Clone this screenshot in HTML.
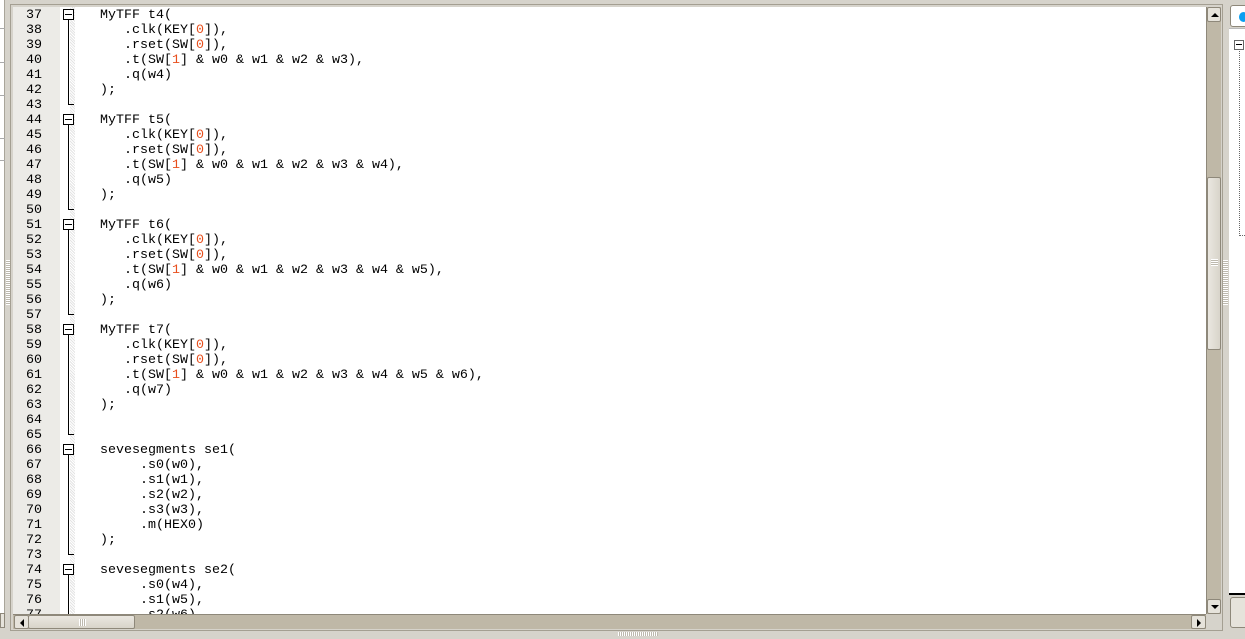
<!DOCTYPE html>
<html><head><meta charset="utf-8"><style>
*{margin:0;padding:0;box-sizing:border-box}
body{width:1245px;height:639px;background:#d6d3cb;position:relative;overflow:hidden;font-family:"Liberation Mono",monospace}
.abs{position:absolute}
#leftp{left:0;top:0;width:5px;height:628px;background:#fff;border-right:1px solid #a9a59a}
#frame{left:10px;top:4px;width:1213px;height:627px;border:1px solid #a49f92;background:#d6d3cb}
#ed{left:13px;top:7px;width:1193px;height:607px;background:#fff;overflow:hidden}
#gut{left:0;top:0;width:47px;height:607px;background:#ecebe7}
#hatch{left:57px;top:0;width:5px;height:607px;background:repeating-linear-gradient(45deg,#e4e4e4 0 1px,#fff 1px 2px)}
.ln{position:absolute;left:0;width:29px;text-align:right;font-size:13.33px;line-height:15px;color:#000;margin-top:1px}
.code{position:absolute;left:87px;font-size:13.33px;line-height:15px;white-space:pre;color:#000;margin-top:1px}
.o{color:#e8501e}
.fb{position:absolute;left:50px;width:11px;height:11px;border:1px solid #000;background:#fff}
.fb:after{content:"";position:absolute;left:1px;top:4px;width:7px;height:1px;background:#000}
.vl{position:absolute;left:55px;width:1px;background:#000}
.tk{position:absolute;left:55px;width:6px;height:1px;background:#000}
#vs{left:1206px;top:7px;width:15px;height:607px;background:#bfb8a7;border-left:1px solid #8e887a}
#hs{left:13px;top:614px;width:1193px;height:15px;background:#bfb8a7;border-top:1px solid #8e887a}
.btn{position:absolute;background:#e6e3db;border:1px solid #8e887a;border-radius:2px}
#rp{left:1229px;top:28px;width:16px;height:565px;background:#fff;border-top:1px solid #bbb}
</style></head><body>
<div class="abs" id="leftp"></div>
<div class="abs" style="left:0;top:28px;width:5px;height:1px;background:#aaa"></div>
<div class="abs" style="left:0;top:62px;width:5px;height:1px;background:#aaa"></div>
<div class="abs" style="left:0;top:95px;width:5px;height:1px;background:#aaa"></div>
<div class="abs" style="left:0;top:138px;width:5px;height:1px;background:#aaa"></div>
<div class="abs" style="left:0;top:160px;width:5px;height:1px;background:#aaa"></div>
<div class="abs" style="left:0;top:613px;width:5px;height:15px;background:#e6e3db;border:1px solid #8e887a"></div>
<div class="abs" style="left:6px;top:260px;width:5px;height:45px;background:repeating-linear-gradient(#fff 0 1px,#bdb9ae 1px 2px)"></div>
<div class="abs" id="frame"></div>
<div class="abs" id="ed">
<div class="abs" id="gut"></div>
<div class="abs" id="hatch"></div>
<div id="lines"></div>
</div>
<div class="abs" id="vs">
<div class="btn" style="left:0;top:0;width:14px;height:15px"><div style="position:absolute;left:3px;top:5px;border-left:4px solid transparent;border-right:4px solid transparent;border-bottom:4px solid #000"></div></div>
<div class="btn" style="left:0;top:170px;width:14px;height:173px;background:linear-gradient(90deg,#eae7e0,#d8d4ca)"><div style="position:absolute;left:3px;top:81px;width:7px;height:7px;background:repeating-linear-gradient(#fff 0 1px,#bdb9ae 1px 2px)"></div></div>
<div class="btn" style="left:0;top:592px;width:14px;height:15px"><div style="position:absolute;left:3px;top:5px;border-left:4px solid transparent;border-right:4px solid transparent;border-top:4px solid #000"></div></div>
</div>
<div class="abs" id="hs">
<div class="btn" style="left:1px;top:0;width:15px;height:14px"><div style="position:absolute;left:5px;top:3px;border-top:4px solid transparent;border-bottom:4px solid transparent;border-right:4px solid #000"></div></div>
<div class="btn" style="left:15px;top:0;width:107px;height:14px;background:linear-gradient(#eae7e0,#d8d4ca)"><div style="position:absolute;left:50px;top:3px;width:7px;height:7px;background:repeating-linear-gradient(90deg,#fff 0 1px,#bdb9ae 1px 2px)"></div></div>
<div class="btn" style="left:1178px;top:0;width:15px;height:14px"><div style="position:absolute;left:5px;top:3px;border-top:4px solid transparent;border-bottom:4px solid transparent;border-left:4px solid #000"></div></div>
</div>
<div class="abs" style="left:1223px;top:260px;width:5px;height:45px;background:repeating-linear-gradient(#fff 0 1px,#bdb9ae 1px 2px)"></div>
<div class="abs" style="left:618px;top:632px;width:40px;height:4px;background:repeating-linear-gradient(90deg,#fff 0 1px,#bdb9ae 1px 2px)"></div>
<div class="abs" style="left:1230px;top:5px;width:20px;height:22px;background:#fff;border:1px solid #8e887a;border-radius:3px"><div style="position:absolute;left:8px;top:6px;width:9px;height:10px;border-radius:50%;background:#0a9ef0"></div></div>
<div class="abs" id="rp">
<div style="position:absolute;left:5px;top:11px;width:10px;height:10px;border:1px solid #666;background:#fff"><div style="position:absolute;left:1px;top:3px;width:6px;height:1px;background:#000"></div></div>
<div style="position:absolute;left:10px;top:22px;width:1px;height:185px;border-left:1px dotted #666"></div>
<div style="position:absolute;left:10px;top:206px;width:6px;height:1px;border-top:1px dotted #666"></div>
</div>
<div class="abs" style="left:1229px;top:593px;width:16px;height:2px;background:#000"></div>
<div class="abs" style="left:1230px;top:597px;width:20px;height:31px;background:#e6e3db;border:1px solid #8e887a;border-radius:3px"></div>
<script>
var L=[
["37","MyTFF t4(",1],["38","   .clk(KEY[<span class=o>0</span>]),"],["39","   .rset(SW[<span class=o>0</span>]),"],["40","   .t(SW[<span class=o>1</span>] &amp; w0 &amp; w1 &amp; w2 &amp; w3),"],["41","   .q(w4)"],["42",");"],["43","",2],
["44","MyTFF t5(",1],["45","   .clk(KEY[<span class=o>0</span>]),"],["46","   .rset(SW[<span class=o>0</span>]),"],["47","   .t(SW[<span class=o>1</span>] &amp; w0 &amp; w1 &amp; w2 &amp; w3 &amp; w4),"],["48","   .q(w5)"],["49",");"],["50","",2],
["51","MyTFF t6(",1],["52","   .clk(KEY[<span class=o>0</span>]),"],["53","   .rset(SW[<span class=o>0</span>]),"],["54","   .t(SW[<span class=o>1</span>] &amp; w0 &amp; w1 &amp; w2 &amp; w3 &amp; w4 &amp; w5),"],["55","   .q(w6)"],["56",");"],["57","",2],
["58","MyTFF t7(",1],["59","   .clk(KEY[<span class=o>0</span>]),"],["60","   .rset(SW[<span class=o>0</span>]),"],["61","   .t(SW[<span class=o>1</span>] &amp; w0 &amp; w1 &amp; w2 &amp; w3 &amp; w4 &amp; w5 &amp; w6),"],["62","   .q(w7)"],["63",");"],["64",""],["65","",2],
["66","sevesegments se1(",1],["67","     .s0(w0),"],["68","     .s1(w1),"],["69","     .s2(w2),"],["70","     .s3(w3),"],["71","     .m(HEX0)"],["72",");"],["73","",2],
["74","sevesegments se2(",1],["75","     .s0(w4),"],["76","     .s1(w5),"],["77","     .s2(w6),"]];
var h="",start=0;
L.forEach(function(r,i){var y=i*15;
h+='<div class="ln" style="top:'+y+'px">'+r[0]+'</div><div class="code" style="top:'+y+'px">'+r[1]+'</div>';
if(r[2]==1){h+='<div class="fb" style="top:'+(y+2)+'px"></div>';start=y+13;}
if(r[2]==2){h+='<div class="vl" style="top:'+start+'px;height:'+(y+8-start)+'px"></div><div class="tk" style="top:'+(y+7)+'px"></div>';start=-1;}
});
h+='<div class="vl" style="top:'+start+'px;height:'+(607-start)+'px"></div>';
document.getElementById("lines").innerHTML=h;
</script>
</body></html>
